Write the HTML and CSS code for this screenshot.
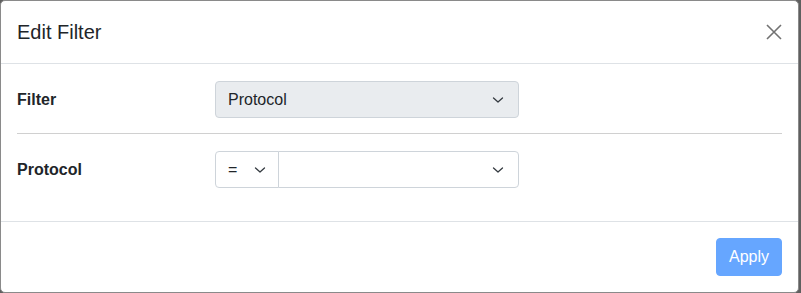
FILE: index.html
```html
<!DOCTYPE html>
<html>
<head>
<meta charset="utf-8">
<link rel="stylesheet" href="styles.css">
</head>
<body>
<div class="modal">
  <div class="modal-header">
    <h5 class="modal-title">Edit Filter</h5>
    <button class="btn-close" aria-label="Close">
      <svg width="16" height="16" viewBox="0 0 16 16"><path d="M1 1 15 15M15 1 1 15" stroke="#000" stroke-width="1.6" fill="none"/></svg>
    </button>
  </div>
  <div class="modal-body">
    <div class="form-row">
      <label class="form-label">Filter</label>
      <div class="select select-wide disabled">
        <span class="select-text">Protocol</span>
        <svg class="chev" width="12" height="8" viewBox="0 0 12 8"><path d="M1.5 2 6 6 10.5 2" stroke="#343a40" stroke-width="1.3" fill="none" stroke-linecap="round" stroke-linejoin="round"/></svg>
      </div>
    </div>
    <hr class="divider">
    <div class="form-row last">
      <label class="form-label">Protocol</label>
      <div class="input-group">
        <div class="select select-op">
          <span class="select-text">=</span>
          <svg class="chev" width="12" height="8" viewBox="0 0 12 8"><path d="M1.5 2 6 6 10.5 2" stroke="#343a40" stroke-width="1.3" fill="none" stroke-linecap="round" stroke-linejoin="round"/></svg>
        </div>
        <div class="select select-val">
          <span class="select-text"></span>
          <svg class="chev" width="12" height="8" viewBox="0 0 12 8"><path d="M1.5 2 6 6 10.5 2" stroke="#343a40" stroke-width="1.3" fill="none" stroke-linecap="round" stroke-linejoin="round"/></svg>
        </div>
      </div>
    </div>
  </div>
  <div class="modal-footer">
    <button class="btn-primary" disabled>Apply</button>
  </div>
</div>
</body>
</html>
```
FILE: styles.css
```css
* { box-sizing: border-box; }
html, body { margin: 0; padding: 0; }
body {
  background: #5f5f5f;
  font-family: "Liberation Sans", Arial, sans-serif;
  color: #212529;
  width: 801px;
  height: 293px;
  overflow: hidden;
}
.modal {
  width: 799px;
  height: 293px;
  background: #fff;
  border: 1px solid #8a8a8a;
  border-radius: 5px;
  display: flex;
  flex-direction: column;
}
.modal-header {
  display: flex;
  align-items: center;
  justify-content: space-between;
  padding: 16px;
  border-bottom: 1px solid #dee2e6;
}
.modal-title {
  margin: 0;
  font-size: 20px;
  font-weight: 400;
  line-height: 30px;
}
.btn-close {
  border: 0;
  background: transparent;
  padding: 0;
  width: 16px;
  height: 16px;
  opacity: 0.55;
  display: flex;
}
.modal-body {
  padding: 16px;
}
.form-row {
  display: flex;
  align-items: center;
  height: 37px;
  margin-top: 1px;
}
.form-row.last { margin-bottom: 17px; }
.form-label {
  width: 198px;
  font-weight: 700;
  font-size: 16px;
}
.select {
  height: 37px;
  border: 1px solid #ced4da;
  border-radius: 4px;
  display: flex;
  align-items: center;
  justify-content: space-between;
  padding: 0 14px 0 12px;
  font-size: 16px;
  color: #212529;
  background: #fff;
}
.select.disabled { background: #e9ecef; }
.select-wide { width: 304px; }
.input-group { display: flex; width: 304px; }
.select-op {
  width: 64px;
  border-top-right-radius: 0;
  border-bottom-right-radius: 0;
  padding-right: 12px;
}
.select-val {
  flex: 1;
  margin-left: -1px;
  border-top-left-radius: 0;
  border-bottom-left-radius: 0;
}
.chev { flex: none; }
.divider {
  border: 0;
  border-top: 1px solid #d0d0d0;
  margin: 15px 0 17px;
}
.modal-footer {
  border-top: 1px solid #dee2e6;
  padding: 16px;
  display: flex;
  justify-content: flex-end;
}
.btn-primary {
  background: #66a6ff;
  border: 1px solid #66a6ff;
  color: #fff;
  font-family: "Liberation Sans", Arial, sans-serif;
  font-size: 16px;
  line-height: 24px;
  padding: 6px 12px;
  border-radius: 4px;
  height: 38px;
}
```
